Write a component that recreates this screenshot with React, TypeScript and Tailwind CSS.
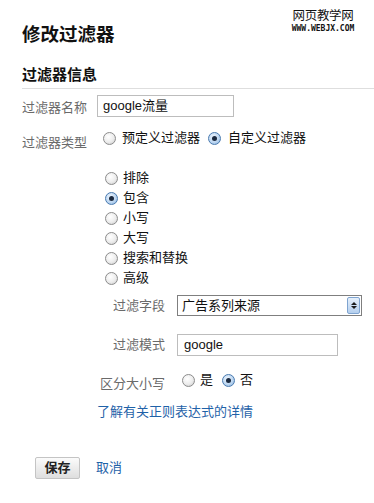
import React from "react";

const FONT = '"Liberation Sans", "Noto Sans CJK SC", sans-serif';

function Radio({ checked = false }: { checked?: boolean }) {
  return (
    <span
      className={
        "relative inline-flex h-[13px] w-[13px] shrink-0 items-center justify-center rounded-full border " +
        (checked
          ? "border-[#4a7bb0] bg-[radial-gradient(circle_at_40%_35%,#eef6ff_0%,#b9d4f0_60%,#7fa8d6_100%)]"
          : "border-[#8c8c8c] bg-[radial-gradient(circle_at_40%_35%,#ffffff_0%,#ececec_55%,#c4c4c4_100%)]")
      }
    >
      {checked && <span className="block h-[5px] w-[5px] rounded-full bg-[#1b2a40]" />}
    </span>
  );
}

function RadioItem({ checked, label, gap = "gap-[5px]" }: { checked?: boolean; label: string; gap?: string }) {
  return (
    <label className={"flex items-center text-[13px] leading-[16px] text-[#111] " + gap}>
      <Radio checked={checked} />
      <span>{label}</span>
    </label>
  );
}

export default function App() {
  return (
    <div
      className="relative h-[503px] w-[374px] overflow-hidden bg-white pl-[22px]"
      style={{ fontFamily: FONT }}
    >
      {/* watermark logo */}
      <div className="absolute right-[18px] top-[7px] flex w-[66px] flex-col items-center">
        <span className="text-[12.5px] leading-[15px] tracking-[-0.3px] text-[#111]" style={{ fontFamily: '"Noto Sans CJK SC", sans-serif' }}>
          网页教学网
        </span>
        <span
          className="mt-[2px] text-[8px] font-bold leading-[9px] text-[#111]"
          style={{ fontFamily: '"DejaVu Sans Mono", monospace' }}
        >
          WWW.WEBJX.COM
        </span>
      </div>

      <h1 className="pt-[24px] text-[18.5px] font-bold leading-[22px] text-[#111]">修改过滤器</h1>
      <h2 className="mt-[19px] text-[15px] font-bold leading-[20px] text-[#111]">过滤器信息</h2>
      <div className="mt-[3px] border-t border-[#dedede]" />

      {/* name */}
      <div className="mt-[6px] flex items-center">
        <span className="w-[75px] pt-[3px] text-[13px] leading-[16px] text-[#6a6a6a]">过滤器名称</span>
        <div className="flex h-[22px] w-[137px] items-center border border-[#bdbdbd] pl-[5px] text-[13px] text-[#111]">
          google流量
        </div>
      </div>

      {/* type */}
      <div className="mt-[13px] flex items-start">
        <span className="w-[75px] pt-[5px] text-[13px] leading-[16px] text-[#6a6a6a]">过滤器类型</span>
        <div className="ml-[6px] flex items-center">
          <RadioItem label="预定义过滤器" gap="gap-[6px]" />
          <div className="ml-[8px]">
            <RadioItem checked label="自定义过滤器" gap="gap-[7px]" />
          </div>
        </div>
      </div>

      {/* list */}
      <div className="ml-[83px] mt-[17px] flex flex-col">
        {[
          ["排除", false],
          ["包含", true],
          ["小写", false],
          ["大写", false],
          ["搜索和替换", false],
          ["高级", false],
        ].map(([l, c]) => (
          <div key={l as string} className="flex h-[20px] items-center">
            <RadioItem label={l as string} checked={c as boolean} />
          </div>
        ))}
      </div>

      {/* field */}
      <div className="mt-[7px] flex items-center">
        <span className="w-[143px] text-right text-[13px] leading-[16px] text-[#6a6a6a]">过滤字段</span>
        <div className="ml-[12px] flex h-[21px] w-[185px] items-stretch border border-[#7f7f7f] bg-white">
          <span className="flex flex-1 items-center pl-[4px] text-[13px] text-[#111]">广告系列来源</span>
          <span className="m-[1px] flex w-[13px] flex-col items-center justify-center gap-[1px] rounded-[2px] border border-[#7fa4d0] bg-[linear-gradient(#e6f0fb,#b4cfee)]">
            <span className="h-0 w-0 border-x-[3px] border-b-[3px] border-x-transparent border-b-[#1b1b1b]" />
            <span className="h-0 w-0 border-x-[3px] border-t-[3px] border-x-transparent border-t-[#1b1b1b]" />
          </span>
        </div>
      </div>

      {/* mode */}
      <div className="mt-[18px] flex items-center">
        <span className="w-[143px] text-right text-[13px] leading-[16px] text-[#6a6a6a]">过滤模式</span>
        <div className="ml-[12px] flex h-[22px] w-[161px] items-center border border-[#bdbdbd] pl-[6px] text-[13px] text-[#111]">
          google
        </div>
      </div>

      {/* case */}
      <div className="mt-[16px] flex items-start">
        <span className="w-[143px] pt-[4px] text-right text-[13px] leading-[16px] text-[#6a6a6a]">区分大小写</span>
        <div className="ml-[17px] flex items-center">
          <RadioItem label="是" />
          <div className="ml-[9px]">
            <RadioItem checked label="否" />
          </div>
        </div>
      </div>

      <a className="ml-[75px] mt-[12px] block text-[13px] leading-[16px] text-[#1f62a8]">了解有关正则表达式的详情</a>

      <div className="ml-[13px] mt-[37px] flex items-center">
        <button className="h-[22px] w-[45px] rounded-[2px] border border-[#c4c4c4] bg-[linear-gradient(#fbfbfb,#dedede)] text-[13px] font-bold text-[#222]">
          保存
        </button>
        <a className="ml-[16px] text-[13px] text-[#1f62a8]">取消</a>
      </div>
    </div>
  );
}
